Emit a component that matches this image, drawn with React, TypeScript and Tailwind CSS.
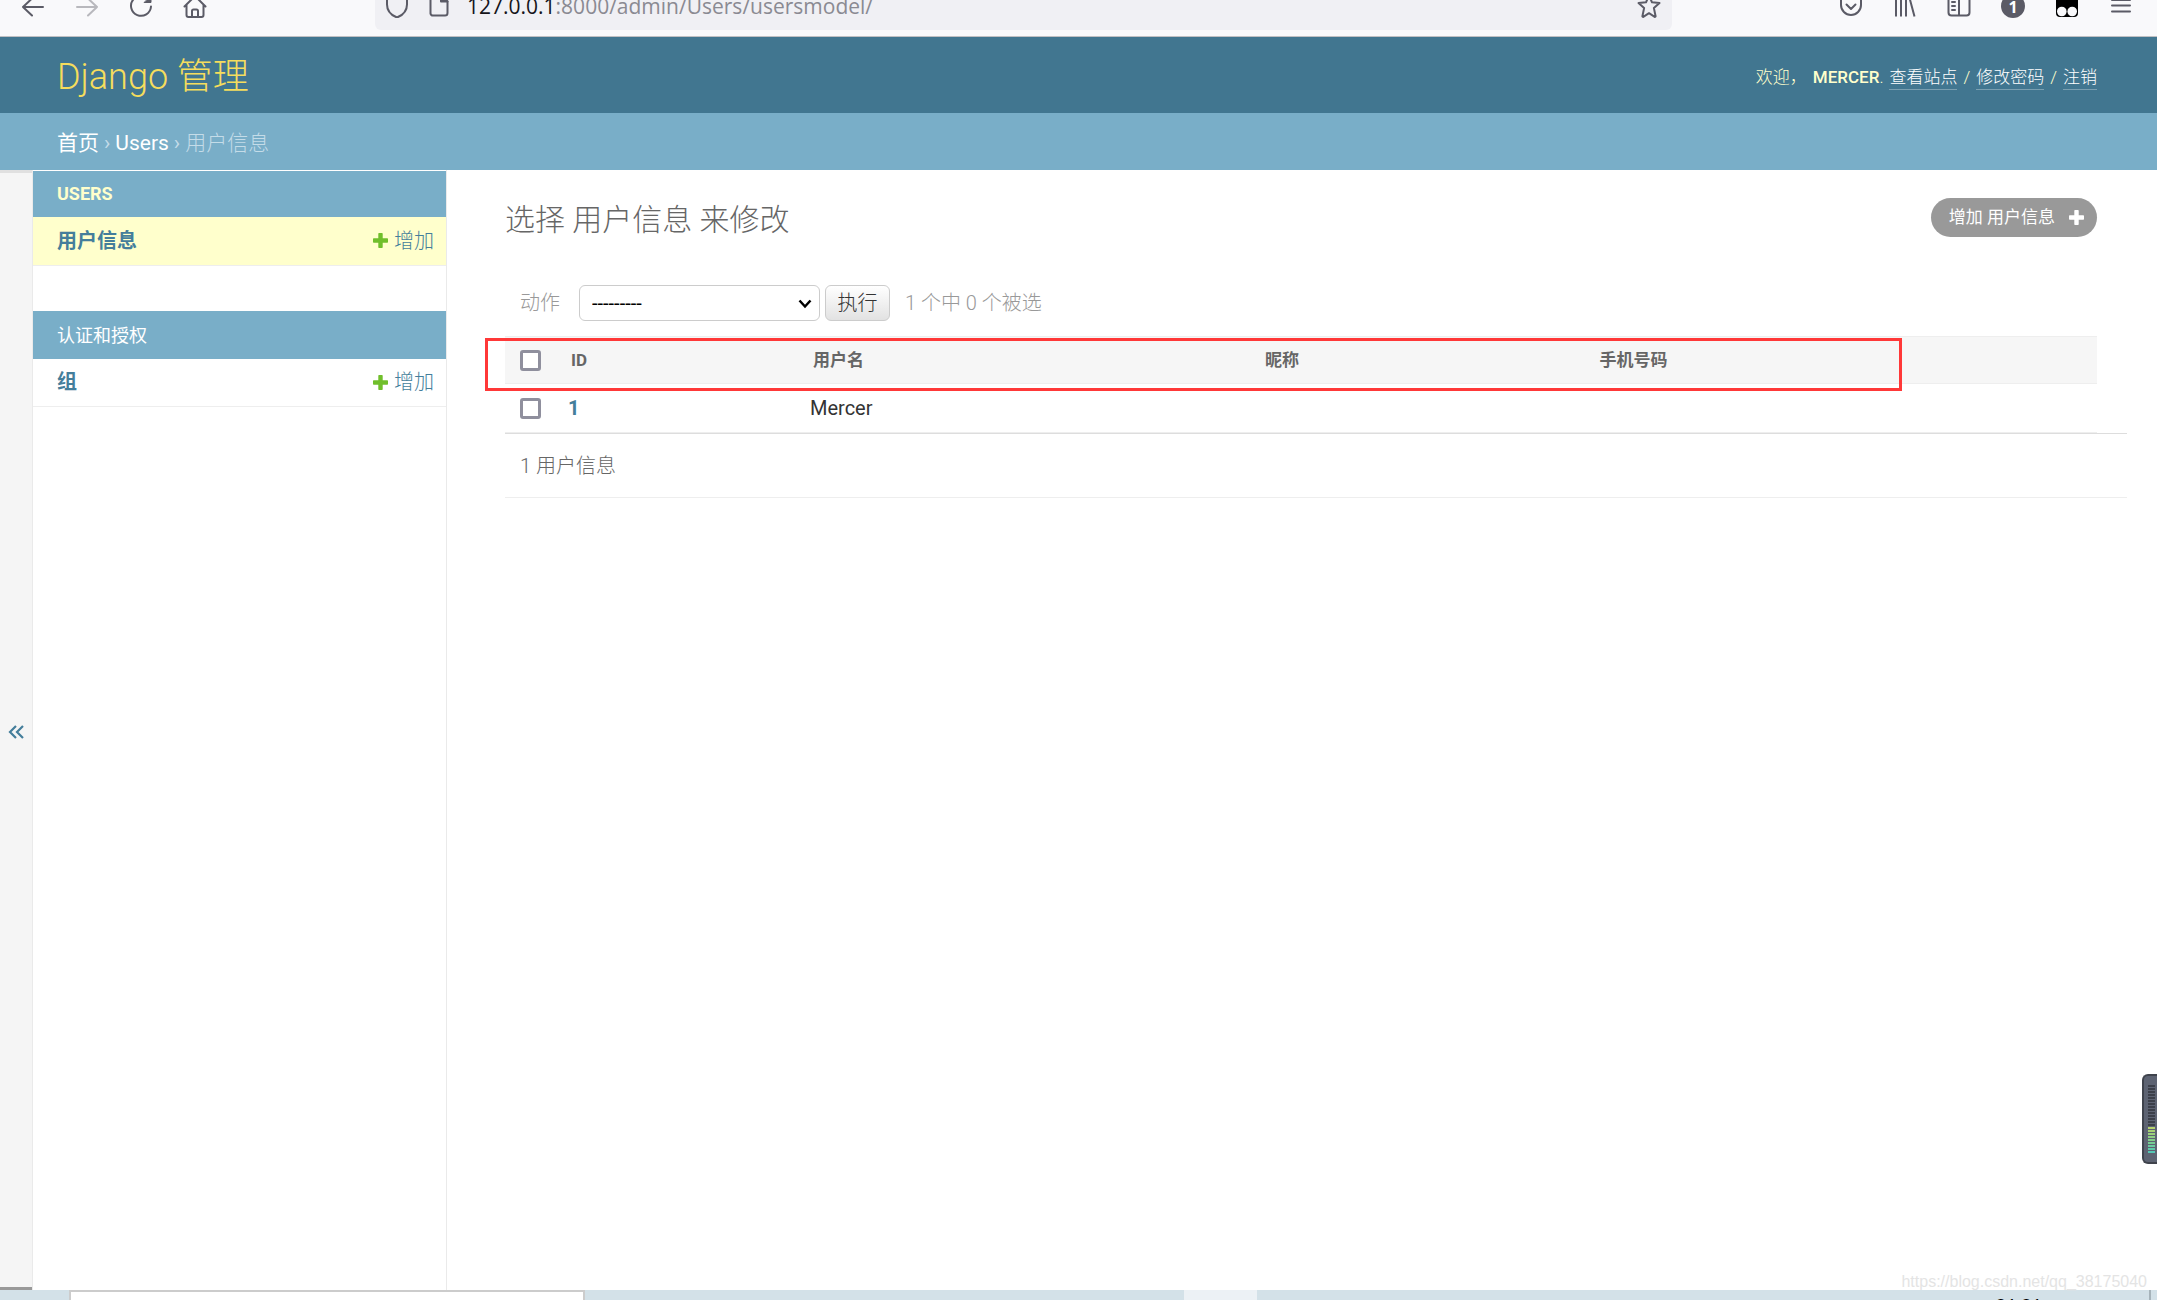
import type { ReactNode } from "react";

function Icon({ children, className = "" }: { children: ReactNode; className?: string }) {
  return (
    <svg
      viewBox="0 0 24 24"
      className={`size-6 shrink-0 ${className}`}
      fill="none"
      stroke="currentColor"
      strokeWidth="2"
      strokeLinecap="round"
      strokeLinejoin="round"
      aria-hidden="true"
    >
      {children}
    </svg>
  );
}

function Plus({ className }: { className: string }) {
  return (
    <svg viewBox="0 0 15 15" className={`size-[15px] shrink-0 ${className}`} fill="currentColor" aria-hidden="true">
      <path d="M6 0h3a.7.7 0 0 1 .7.7v4.6h4.6a.7.7 0 0 1 .7.7v3a.7.7 0 0 1-.7.7H9.700v4.600a.7.7 0 0 1-.7.7H6a.7.7 0 0 1-.7-.7V9.700H.7A.7.7 0 0 1 0 9V6a.7.7 0 0 1 .7-.7h4.600V.7A.7.7 0 0 1 6 0z" />
    </svg>
  );
}

function BrowserBar() {
  return (
    <div className="flex h-[37px] shrink-0 items-end overflow-hidden border-b border-[#c0c0c3] bg-[#f9f9fb]">
      <div className="flex h-[60px] w-full items-center pl-[21px] pr-6 text-[#5b5b66]">
        <div className="flex gap-[30px]">
          <button aria-label="后退">
            <Icon><path d="M22 13H2M11 4.500L2 13l9 8.500" /></Icon>
          </button>
          <button aria-label="前进" className="text-[#b8b8bd]">
            <Icon><path d="M2 13h20M13 4.500l9 8.500-9 8.500" /></Icon>
          </button>
          <button aria-label="刷新">
            <Icon>
              <path d="M20.500 6.500A10 10 0 1 0 22 12.500" />
              <path d="M22 2v6.500h-6.500z" fill="currentColor" strokeWidth="1" />
            </Icon>
          </button>
          <button aria-label="主页">
            <Icon>
              <path d="M1.500 12.500L12 2l10.500 10.500M3.500 11v10a2 2 0 0 0 2 2h13a2 2 0 0 0 2-2V11" />
              <path d="M9 23v-6a1.500 1.500 0 0 1 1.500-1.500h3A1.500 1.500 0 0 1 15 17v6" />
            </Icon>
          </button>
        </div>
        <div className="ml-[168px] mr-[167px] flex h-12 min-w-0 flex-1 items-center rounded-md bg-[#f0f0f4] pl-2.5 pr-[11px]">
          <Icon><path d="M12 1L2 4.500v6C2 17 7 21.500 12 23.500 17 21.500 22 17 22 10.500v-6z" /></Icon>
          <Icon className="ml-[18px]">
            <path d="M14 1H6a2.500 2.500 0 0 0-2.500 2.500v16A2.500 2.500 0 0 0 6 21.500h12a2.500 2.500 0 0 0 2.500-2.500V7.500z" />
            <path d="M14 1v6.500h6.500z" fill="currentColor" />
          </Icon>
          <div className="ml-4 flex-1 whitespace-nowrap font-['Open_Sans','Noto_Sans',sans-serif] text-[21px] leading-7 text-[#8a8a92]">
            <span className="text-[#15141a]">127.0.0.1</span>:8000/admin/Users/usersmodel/
          </div>
          <button aria-label="加入书签">
            <Icon>
              <path d="M12 1.500l3 6.800 7.500.8-5.600 5 1.700 8.100a.6.6 0 0 1-.9.600L12 19.200l-5.700 3.600a.6.6 0 0 1-.9-.600l1.700-8.100-5.600-5L9 8.300z" />
            </Icon>
          </button>
        </div>
        <div className="flex gap-[30px]">
          <button aria-label="Pocket">
            <Icon>
              <path d="M2 3.500h20V11a10 10 0 0 1-20 0z" />
              <path d="M7.500 10.500L12 15l4.500-4.500" />
            </Icon>
          </button>
          <button aria-label="我的足迹">
            <Icon><path d="M3 1v21.500M8 1v21.500M13 1v21.500M16 2L21.500 22.500" strokeLinecap="butt" /></Icon>
          </button>
          <button aria-label="侧栏">
            <Icon>
              <rect x="1.500" y="1.500" width="21" height="20" rx="3" />
              <path d="M12 2v19M5 8h3M5 12h3M5 16h3" />
            </Icon>
          </button>
          <button aria-label="账户" className="flex size-6 items-center justify-center rounded-full bg-[#5b5b66] pt-0.5 font-['Open_Sans',sans-serif] text-base font-bold leading-none text-white">
            1
          </button>
          <button aria-label="扩展">
            <svg viewBox="0 0 24 24" className="size-6" aria-hidden="true">
              <rect x="1" y="1" width="22" height="22" rx="4" fill="#000" />
              <circle cx="6.800" cy="17.500" r="4.800" fill="#f9f9fb" />
              <circle cx="17.200" cy="17.500" r="4.800" fill="#f9f9fb" />
            </svg>
          </button>
          <button aria-label="菜单">
            <Icon><path d="M3 6h18M3 11.500h18M3 17.500h18" /></Icon>
          </button>
        </div>
      </div>
    </div>
  );
}

function SiteHeader() {
  const link = "border-b border-white/30 text-white";
  return (
    <header className="flex h-[76px] shrink-0 items-center justify-between bg-[#417690] pl-[57px] pr-[60px] pt-1 text-[#ffc]">
      <h1 className="text-4xl font-light text-[#f5dd5d]">
        <a href="#site">Django 管理</a>
      </h1>
      <div className="flex gap-1.5 text-[17px] font-light leading-6">
        <span>欢迎，</span>
        <span><strong className="font-medium">MERCER</strong>.</span>
        <a href="#view" className={link}>查看站点</a>
        <span>/</span>
        <a href="#password" className={link}>修改密码</a>
        <span>/</span>
        <a href="#logout" className={link}>注销</a>
      </div>
    </header>
  );
}

function AppModule({ name, model, current, strong }: { name: string; model: string; current?: boolean; strong?: boolean }) {
  return (
    <table className="mb-[45px] w-full">
      <caption className={strong ? "h-[46px] bg-[#79aec8] pl-6 text-left text-lg font-bold leading-[46px] text-[#ffc]" : "h-12 bg-[#79aec8] pl-6 text-left text-lg leading-[50px] text-white"}>
        <a href="#app">{name}</a>
      </caption>
      <tbody>
        <tr className={current ? "h-12 border-b border-[#eee] bg-[#ffc]" : "h-12 border-b border-[#eee]"}>
          <th scope="row" className="pl-6 text-left text-xl font-bold leading-6 text-[#447e9b]">
            <a href="#model">{model}</a>
          </th>
          <td className="pr-3 text-xl font-light leading-6 text-[#447e9b]">
            <a href="#add" className="flex items-center justify-end gap-1.5">
              <Plus className="text-[#70bf2b]" />
              增加
            </a>
          </td>
        </tr>
      </tbody>
    </table>
  );
}

function Box({ label }: { label: string }) {
  return (
    <input
      type="checkbox"
      aria-label={label}
      className="block size-[21px] appearance-none rounded-[3px] border-[3px] border-[#8f8f9d] bg-white"
    />
  );
}

function ChangeList() {
  const th = "pl-3.5 text-left";
  return (
    <main className="min-w-0 flex-1 pl-[58px] pr-[30px] pt-7">
      <div className="flex h-[39px] items-center justify-between pr-[30px]">
        <h2 className="pt-1 text-3xl font-light text-[#666]">选择 用户信息 来修改</h2>
        <a href="#add-user" className="flex h-full items-center gap-3.5 rounded-full bg-[#999] pl-[18px] pr-[13px] text-[17px] text-white">
          增加 用户信息
          <Plus className="text-white" />
        </a>
      </div>

      <form className="mt-12">
        <div className="flex h-9 items-center pl-[15px] text-xl text-[#999]">
          <label htmlFor="action" className="mr-[19px] font-light">动作</label>
          <div className="relative mr-[5px] h-9 w-[241px]">
            <select id="action" className="h-full w-full appearance-none rounded-md border border-[#ccc] bg-white pl-3 pr-8 text-xl leading-6 text-black">
              <option>---------</option>
            </select>
            <svg viewBox="0 0 14 10" className="pointer-events-none absolute right-2 top-3.5 h-2.5 w-3.5" fill="none" stroke="#000" strokeWidth="2.500" aria-hidden="true">
              <path d="M1.500 1.500L7 7.500l5.500-6" />
            </svg>
          </div>
          <button type="button" className="mr-[15px] h-9 w-[65px] rounded-md border border-[#ccc] bg-gradient-to-b from-white to-[#e2e2e2] font-light text-[#333]">
            执行
          </button>
          <span className="font-light">1 个中 0 个被选</span>
        </div>

        <div className="relative mr-[30px] mt-[15px]">
          <table className="w-full table-fixed">
            <thead>
              <tr className="h-[47px] border-y border-[#eee] bg-[#f6f6f6] text-[17px] font-bold leading-6 text-[#666]">
                <th scope="col" className="w-[52px] pl-[15px]"><Box label="全选" /></th>
                <th scope="col" className={`w-[15.2%] ${th}`}>ID</th>
                <th scope="col" className={`w-[28.4%] ${th}`}>用户名</th>
                <th scope="col" className={`w-[21%] ${th}`}>昵称</th>
                <th scope="col" className={th}>手机号码</th>
              </tr>
            </thead>
            <tbody>
              <tr className="h-[49px] border-b border-[#eee] text-xl leading-6 text-[#333]">
                <td className="pl-[15px]"><Box label="选择 1" /></td>
                <th scope="row" className="pl-[11px] text-left font-bold text-[#447e9b]"><a href="#1">1</a></th>
                <td className="pl-[11px]">Mercer</td>
                <td />
                <td />
              </tr>
            </tbody>
          </table>
          {/* highlight drawn over the column titles */}
          <div className="pointer-events-none absolute -left-5 right-[195px] top-0.5 h-[53px] border-[3px] border-[#ff3838]" />
        </div>
        <p className="flex h-[65px] items-center border-y border-b-[#eee] border-t-[#ddd] pl-[15px] text-xl font-light text-[#666]">
          1 用户信息
        </p>
      </form>
    </main>
  );
}

function LevelMeter() {
  const lit = ["#b5d36e", "#a8d174", "#9bd07b", "#8ecf82", "#82ce8a", "#76cc94", "#6acb9f", "#5fc9a9", "#55c8b5"];
  const bars = [...Array<string>(14).fill("#3c404a"), ...lit];
  return (
    <div className="absolute right-0 top-[1074px] flex h-[90px] w-[15px] flex-col gap-px overflow-hidden rounded-l-md border-2 border-r-0 border-[#3f434c] bg-[#5d6372] pl-1 pt-[9px]">
      {bars.map((color, i) => (
        <div key={i} className="h-0.5 w-[7px] shrink-0" style={{ backgroundColor: color }} />
      ))}
    </div>
  );
}

function Taskbar() {
  return (
    <footer className="flex h-2.5 shrink-0 items-start overflow-hidden bg-[#d3e1e8]">
      <div className="ml-[69px] h-5 w-[516px] shrink-0 border-2 border-[#ccc] bg-white" />
      <div className="ml-[599px] h-full w-[73px] shrink-0 bg-[#ecf1f5]" />
      <div className="ml-auto mr-[107px] pt-[3px] font-['Open_Sans',sans-serif] text-lg leading-6 text-black">21:21</div>
      <div className="mr-1.5 h-full w-0.5 bg-[#a6b3ba]" />
    </footer>
  );
}

export default function App() {
  return (
    <div className="relative flex h-screen flex-col overflow-hidden bg-white font-['Roboto','Noto_Sans_CJK_SC',sans-serif] text-[#333]">
      <BrowserBar />
      <SiteHeader />
      <nav aria-label="导航" className="flex h-[57px] shrink-0 items-center gap-[5px] bg-[#79aec8] pl-[57px] pt-1 text-[21px] text-[#c4dce8]">
        <a href="#home" className="text-white">首页</a>
        <span>›</span>
        <a href="#users" className="text-white">Users</a>
        <span>›</span>
        <span className="font-light">用户信息</span>
      </nav>
      <div className="flex min-h-0 flex-1">
        <button
          aria-label="切换导航"
          className="flex w-8 shrink-0 items-center justify-center border-y-[3px] border-b-[#999] border-t-[#e0e0e0] bg-[#f5f5f5] pt-1 text-[#447e9b]"
        >
          <svg viewBox="0 0 16 14" className="h-3.5 w-4" fill="none" stroke="currentColor" strokeWidth="2.200" aria-hidden="true">
            <path d="M8 1L2 7l6 6M15 1L9 7l6 6" />
          </svg>
        </button>
        <aside className="w-[415px] shrink-0 border-x border-[#eaeaea] pt-px">
          <AppModule name="USERS" model="用户信息" current strong />
          <AppModule name="认证和授权" model="组" />
        </aside>
        <ChangeList />
      </div>
      <Taskbar />
      <LevelMeter />
      <div className="absolute bottom-1.5 right-2.5 font-['Liberation_Sans',sans-serif] text-base leading-6 text-[#e4e4e4]">
        https://blog.csdn.net/qq_38175040
      </div>
    </div>
  );
}
